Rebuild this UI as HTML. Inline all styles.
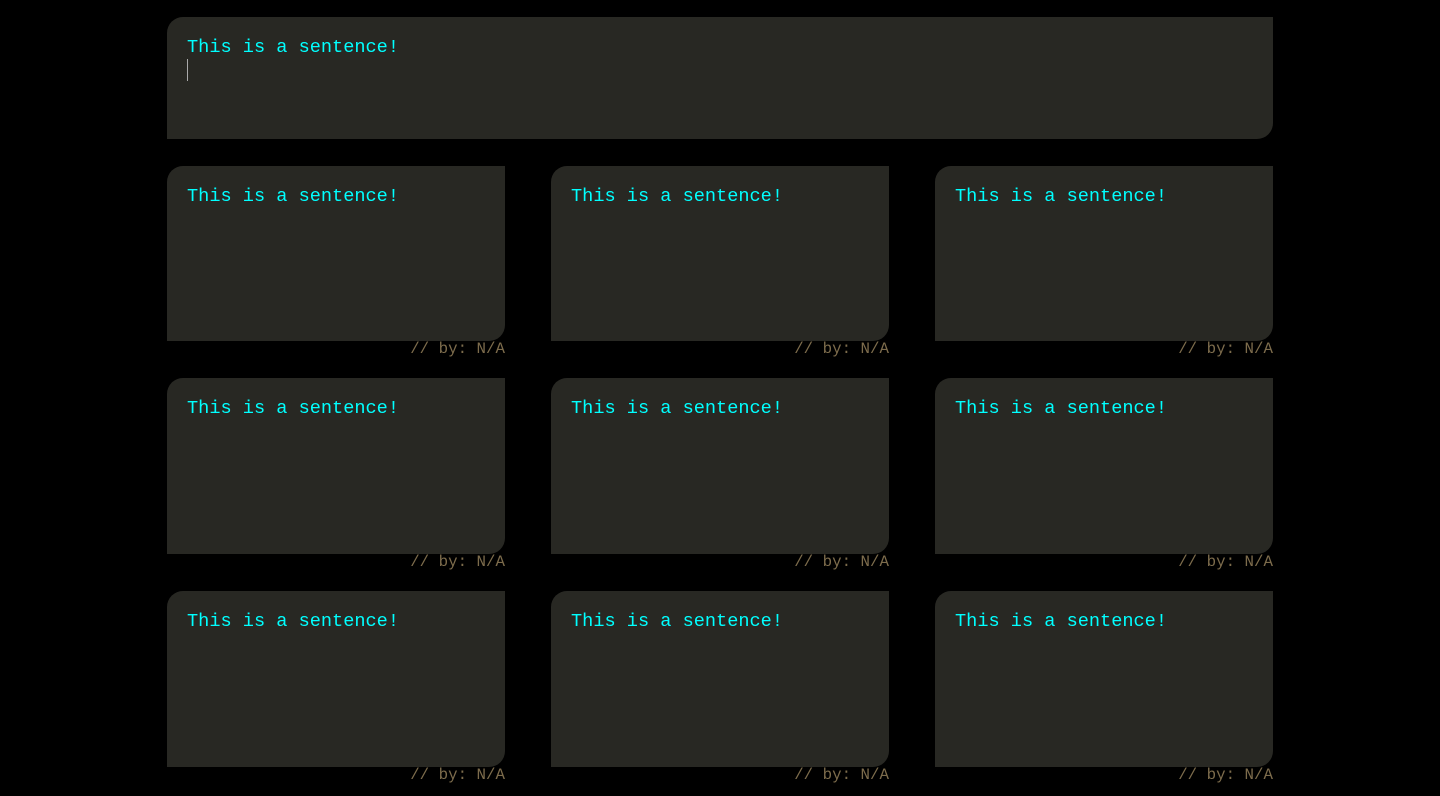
<!DOCTYPE html>
<html><head><style>
body{margin:0;background:#000;width:1440px;height:796px;overflow:hidden;font-family:"Liberation Mono",monospace;}
.box{position:absolute;background:#282823;border-radius:16px 0 16px 0;}
.t{position:absolute;left:20px;top:20px;color:#00ffff;font-size:18.6px;line-height:22px;white-space:nowrap;}
.f{position:absolute;color:#7d6c4c;font-size:15.8px;line-height:16px;white-space:nowrap;text-align:right;width:338px;}
.caret{position:absolute;left:187px;top:59px;width:1px;height:22px;background:#aaa;}
</style></head><body>
<div class="box" style="left:167px;top:17px;width:1106px;height:122px"><div class="t" style="top:20px">This is a sentence!</div></div>
<div class="caret"></div>
<div class="box" style="left:167px;top:166px;width:338px;height:175px"><div class="t">This is a sentence!</div></div>
<div class="box" style="left:551px;top:166px;width:338px;height:175px"><div class="t">This is a sentence!</div></div>
<div class="box" style="left:935px;top:166px;width:338px;height:175px"><div class="t">This is a sentence!</div></div>
<div class="f" style="left:167px;top:341px">// by: N/A</div>
<div class="f" style="left:551px;top:341px">// by: N/A</div>
<div class="f" style="left:935px;top:341px">// by: N/A</div>
<div class="box" style="left:167px;top:378px;width:338px;height:176px"><div class="t">This is a sentence!</div></div>
<div class="box" style="left:551px;top:378px;width:338px;height:176px"><div class="t">This is a sentence!</div></div>
<div class="box" style="left:935px;top:378px;width:338px;height:176px"><div class="t">This is a sentence!</div></div>
<div class="f" style="left:167px;top:554px">// by: N/A</div>
<div class="f" style="left:551px;top:554px">// by: N/A</div>
<div class="f" style="left:935px;top:554px">// by: N/A</div>
<div class="box" style="left:167px;top:591px;width:338px;height:176px"><div class="t">This is a sentence!</div></div>
<div class="box" style="left:551px;top:591px;width:338px;height:176px"><div class="t">This is a sentence!</div></div>
<div class="box" style="left:935px;top:591px;width:338px;height:176px"><div class="t">This is a sentence!</div></div>
<div class="f" style="left:167px;top:767px">// by: N/A</div>
<div class="f" style="left:551px;top:767px">// by: N/A</div>
<div class="f" style="left:935px;top:767px">// by: N/A</div>
</body></html>
